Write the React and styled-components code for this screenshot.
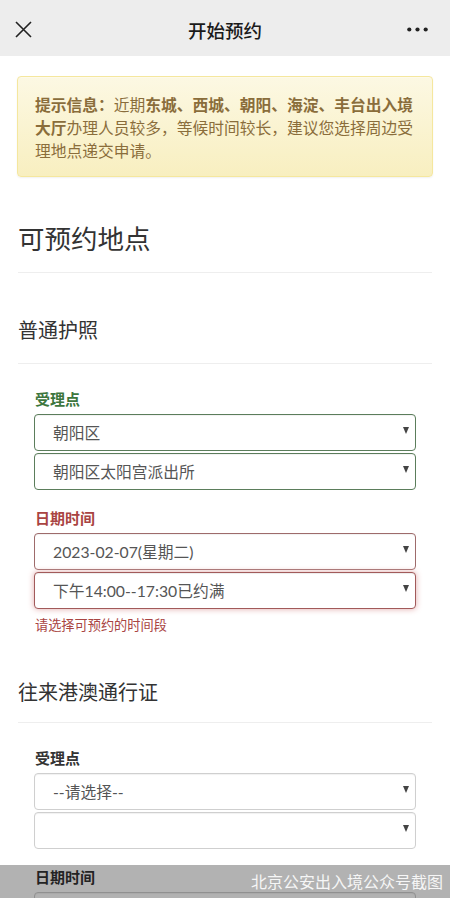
import React from "react";
import styled, { createGlobalStyle } from "styled-components";

const Global = createGlobalStyle`
  html, body { margin: 0; padding: 0; background: #fff; }
  body {
    font-family: Lato, "Noto Sans CJK SC", "Noto Sans", sans-serif;
    color: #333;
    -webkit-font-smoothing: antialiased;
  }
  * { box-sizing: border-box; }
`;

const Page = styled.div`
  width: 450px;
  min-height: 898px;
  position: relative;
  overflow: hidden;
`;

const NavBar = styled.header`
  height: 56px;
  background: #ededed;
  display: grid;
  grid-template-columns: 60px 1fr 60px;
  align-items: center;
  padding-top: 3px;
`;

const NavIcon = styled.div`
  display: flex;
  align-items: center;
  justify-content: ${(p) => (p.$end ? "flex-end" : "flex-start")};
  padding: ${(p) => (p.$end ? "0 22px 0 0" : "0 0 0 15px")};
`;

const NavTitle = styled.h1`
  margin: 0;
  text-align: center;
  font-family: "Noto Sans CJK SC", sans-serif;
  font-size: 18.5px;
  font-weight: 500;
  color: #1a1a1a;
  line-height: 24px;
`;

const Main = styled.main`
  padding: 20px 17px 0;
`;

const Alert = styled.div`
  background: linear-gradient(to bottom, #fcf8e3 0%, #f8efc0 100%);
  border: 1px solid #f5e79e;
  border-radius: 4px;
  box-shadow: inset 0 1px 0 rgba(255, 255, 255, 0.25), 0 1px 2px rgba(0, 0, 0, 0.06);
  padding: 16px 15px 15px 17px;
  color: #8a6d3b;
  font-family: "Noto Sans CJK SC", sans-serif;
  font-size: 15.75px;
  line-height: 23px;
  height: 101px;
`;

const Strong = styled.b`
  font-weight: 700;
`;

const PageTitle = styled.h2`
  margin: 46px 1px 0;
  padding-bottom: 20px;
  border-bottom: 1px solid #eee;
  font-family: "Noto Sans CJK SC", sans-serif;
  font-size: 26.5px;
  font-weight: 400;
  line-height: 29px;
  color: #333;
`;

const SectionTitle = styled.h3`
  margin: ${(p) => p.$top}px 1px 0;
  padding-bottom: ${(p) => p.$bottom}px;
  border-bottom: 1px solid #eee;
  font-family: "Noto Sans CJK SC", sans-serif;
  font-size: 20px;
  font-weight: 400;
  line-height: 28px;
  color: #333;
`;

const FormBlock = styled.div`
  padding: 24px 17px 0;
`;

const Label = styled.div`
  font-family: "Noto Sans CJK SC", sans-serif;
  font-size: 15px;
  font-weight: 700;
  line-height: 21px;
  margin: ${(p) => (p.$first ? "0" : "17px")} 1px 5px;
  color: ${(p) =>
    p.$state === "success" ? "#3c763d" : p.$state === "error" ? "#a94442" : "#333"};
`;

const SelectStack = styled.div`
  display: flex;
  flex-direction: column;
  gap: 2px;
`;

const borderFor = (s) =>
  s === "success" ? "#5b7d5b" : s === "error" ? "#9e6b6b" : s === "focus" ? "#a25a5a" : "#cfcfcf";

const SelectBox = styled.div`
  height: 37px;
  border: 1px solid ${(p) => borderFor(p.$state)};
  border-radius: 4px;
  background: #fff;
  box-shadow: ${(p) =>
    p.$state === "focus"
      ? "inset 0 1px 1px rgba(0,0,0,.075), 0 0 6px #e1a9a8"
      : "inset 0 1px 1px rgba(0,0,0,.06)"};
  display: flex;
  align-items: center;
  justify-content: space-between;
  padding: 0 6px 0 18px;
  font-size: 15.75px;
  color: #555;
  line-height: 20px;
`;

const Caret = styled.span`
  width: 0;
  height: 0;
  border-left: 3.5px solid transparent;
  border-right: 3.5px solid transparent;
  border-top: 7px solid #444;
  margin-bottom: 4px;
`;

const HelpText = styled.div`
  margin: 7px 1px 0;
  font-family: "Noto Sans CJK SC", sans-serif;
  font-size: 13.2px;
  line-height: 18px;
  color: #a94442;
`;

const Watermark = styled.div`
  position: absolute;
  left: 0;
  right: 0;
  top: 865px;
  height: 33px;
  background: rgba(0, 0, 0, 0.3);
  display: flex;
  align-items: center;
  justify-content: flex-end;
  padding: 0 7px 2px 0;
  font-family: "Noto Sans CJK SC", sans-serif;
  font-size: 16px;
  color: #f6f6f6;
`;

const Select = ({ state, children }) => (
  <SelectBox $state={state}>
    <span>{children}</span>
    <Caret />
  </SelectBox>
);

export default function App() {
  return (
    <Page>
      <Global />
      <NavBar>
        <NavIcon>
          <svg width="17" height="17" viewBox="0 0 17 17">
            <path d="M1 1 L16 16 M16 1 L1 16" stroke="#222" strokeWidth="1.6" fill="none" />
          </svg>
        </NavIcon>
        <NavTitle>开始预约</NavTitle>
        <NavIcon $end>
          <svg width="21" height="5" viewBox="0 0 21 5">
            <circle cx="2.3" cy="2.5" r="2.1" fill="#222" />
            <circle cx="10.5" cy="2.5" r="2.1" fill="#222" />
            <circle cx="18.7" cy="2.5" r="2.1" fill="#222" />
          </svg>
        </NavIcon>
      </NavBar>

      <Main>
        <Alert>
          <Strong>提示信息：</Strong>近期<Strong>东城、西城、朝阳、海淀、丰台出入境大厅</Strong>
          办理人员较多，等候时间较长，建议您选择周边受理地点递交申请。
        </Alert>

        <PageTitle>可预约地点</PageTitle>

        <SectionTitle $top={43} $bottom={19}>普通护照</SectionTitle>
        <FormBlock>
          <Label $first $state="success">受理点</Label>
          <SelectStack>
            <Select state="success">朝阳区</Select>
            <Select state="success">朝阳区太阳宫派出所</Select>
          </SelectStack>
          <Label $state="error">日期时间</Label>
          <SelectStack>
            <Select state="error">2023-02-07(星期二)</Select>
            <Select state="focus">下午14:00--17:30已约满</Select>
          </SelectStack>
          <HelpText>请选择可预约的时间段</HelpText>
        </FormBlock>

        <SectionTitle $top={44} $bottom={16}>往来港澳通行证</SectionTitle>
        <FormBlock>
          <Label $first>受理点</Label>
          <SelectStack>
            <Select>--请选择--</Select>
            <Select></Select>
          </SelectStack>
          <Label>日期时间</Label>
          <SelectStack>
            <Select></Select>
          </SelectStack>
        </FormBlock>
      </Main>

      <Watermark>北京公安出入境公众号截图</Watermark>
    </Page>
  );
}
